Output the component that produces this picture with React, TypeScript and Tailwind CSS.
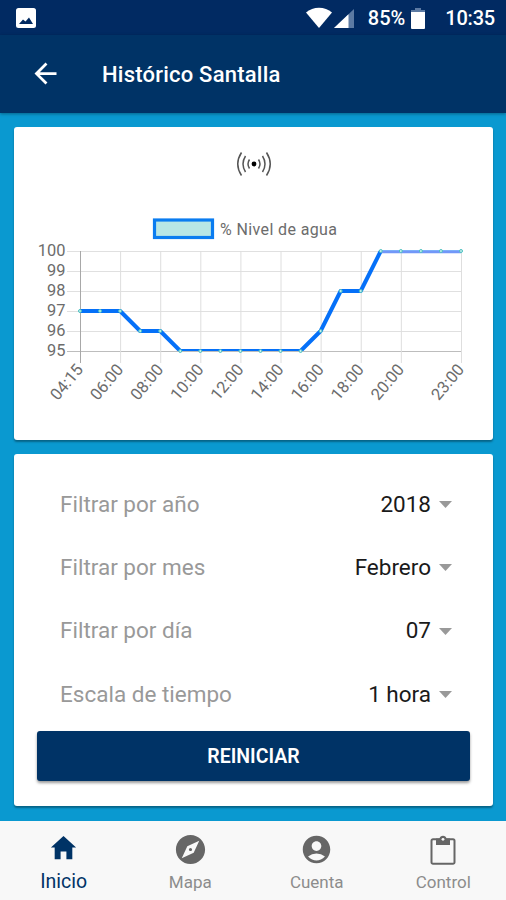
import type { ReactNode } from "react";
import { MdAccountCircle, MdArrowBack, MdExplore } from "react-icons/md";

const LEVELS = [97, 97, 97, 96, 96, 95, 95, 95, 95, 95, 95, 95, 96, 98, 98, 100, 100, 100, 100, 100];

const TIME_TICKS = [
  { index: 0, label: "04:15" },
  { index: 2, label: "06:00" },
  { index: 4, label: "08:00" },
  { index: 6, label: "10:00" },
  { index: 8, label: "12:00" },
  { index: 10, label: "14:00" },
  { index: 12, label: "16:00" },
  { index: 14, label: "18:00" },
  { index: 16, label: "20:00" },
  { index: 19, label: "23:00" },
];

const LEVEL_TICKS = [100, 99, 98, 97, 96, 95];

const FILTERS = [
  { label: "Filtrar por año", value: "2018" },
  { label: "Filtrar por mes", value: "Febrero" },
  { label: "Filtrar por día", value: "07" },
  { label: "Escala de tiempo", value: "1 hora" },
];

function HomeIcon() {
  return (
    <svg className="mb-[2px]" width="31" height="31" viewBox="0 0 512 512" fill="currentColor">
      <path d="M208 448V320h96v128h97.600V256H464L256 64 48 256h62.400v192z" />
    </svg>
  );
}

function ClipboardIcon() {
  return (
    <svg width="26" height="30" viewBox="0 0 26 30" fill="none">
      <path
        d="M3 4.200h20a1.500 1.500 0 0 1 1.500 1.500v21.600a1.500 1.500 0 0 1-1.500 1.500H3a1.500 1.500 0 0 1-1.500-1.500V5.700A1.500 1.500 0 0 1 3 4.200z"
        stroke="currentColor"
        strokeWidth="2"
      />
      <path d="M6 3.500h3.500a3.600 3.600 0 0 1 7 0H20V10H6z" fill="currentColor" />
      <circle cx="13" cy="4.300" r="1.400" fill="#f8f8f8" />
    </svg>
  );
}

const TABS: { label: string; icon: ReactNode; active?: boolean }[] = [
  { label: "Inicio", icon: <HomeIcon />, active: true },
  { label: "Mapa", icon: <MdExplore size={35} /> },
  { label: "Cuenta", icon: <MdAccountCircle size={33} /> },
  { label: "Control", icon: <ClipboardIcon /> },
];

// Plot area inside the chart svg
const LEFT = 66;
const RIGHT = 447;
const TOP = 51;
const BOTTOM = 151;

const xOf = (index: number) => LEFT + (index * (RIGHT - LEFT)) / (LEVELS.length - 1);
const yOf = (level: number) => BOTTOM - (level - 95) * 20;

function StatusBar() {
  return (
    <div className="flex h-[35px] shrink-0 items-center bg-[#012a62] pl-4 pr-[11px] pt-px text-[20px] font-medium text-white">
      <svg className="mb-px" width="20" height="20" viewBox="0 0 20 20">
        <rect width="20" height="20" rx="2.500" fill="#fff" />
        <path d="M3 16l4-4.500 2.500 2 3.500-4L17 16z" fill="#012a62" />
      </svg>
      <svg className="ml-auto" width="49" height="22" viewBox="0 0 49 22">
        <path d="M0 5.500C7-.8 19-.8 26 5.500L13 21z" fill="#fff" />
        <path d="M48 2v19H28z" fill="#5c7aa3" />
        <path d="M42.500 7.200V21H28z" fill="#fff" />
      </svg>
      <span className="ml-[13px]">85%</span>
      <svg className="ml-[6px]" width="14" height="21" viewBox="0 0 14 21">
        <path d="M4 0h6v2h4v3H0V2h4z" fill="#5c7aa3" />
        <path d="M0 4h14v16a1 1 0 0 1-1 1H1a1 1 0 0 1-1-1z" fill="#fff" />
      </svg>
      <span className="ml-[20px] tracking-[-0.2px]">10:35</span>
    </div>
  );
}

function SignalIcon() {
  return (
    <svg width="36" height="26" viewBox="0 0 36 26" fill="none" stroke="#555" strokeWidth="1.500">
      <circle cx="18" cy="13" r="2.400" fill="#000" stroke="none" />
      <path d="M13.500 8.500q-3 4.500 0 9M9.500 5q-5 8 0 16M5.500 1.500q-7.500 11.500 0 23" />
      <path d="M22.500 8.500q3 4.500 0 9M26.500 5q5 8 0 16M30.500 1.500q7.500 11.500 0 23" />
    </svg>
  );
}

function LevelChart() {
  const points = LEVELS.map((level, i) => `${xOf(i)},${yOf(level)}`).join(" ");
  const fullFrom = xOf(LEVELS.indexOf(100));

  return (
    <svg width="479" height="210" viewBox="0 0 479 210" className="block">
      <defs>
        <clipPath id="plot">
          <rect x={LEFT} y={TOP - 0.5} width={RIGHT - LEFT} height={BOTTOM - TOP + 0.5} />
        </clipPath>
      </defs>
      <rect x="140.500" y="20" width="58" height="17.500" fill="#b8e6e5" stroke="#0a7cf0" strokeWidth="3.200" />
      <text x="206" y="35" fontSize="16" fill="#6c6c6c" textLength="117">
        % Nivel de agua
      </text>
      {LEVEL_TICKS.map((level) => (
        <g key={level}>
          <line x1={LEFT - 13} x2={RIGHT} y1={yOf(level) + 0.5} y2={yOf(level) + 0.5} stroke={level === 95 ? "#bdbdbd" : "#e0e0e0"} />
          <text x="51.500" y={yOf(level) + 5} fontSize="16.400" fill="#6c6c6c" textAnchor="end">
            {level}
          </text>
        </g>
      ))}
      {TIME_TICKS.map(({ index, label }) => (
        <g key={label}>
          <line x1={xOf(index) + 0.5} x2={xOf(index) + 0.5} y1={TOP} y2={BOTTOM + 12} stroke={index === 0 ? "#a8a8a8" : "#dedede"} />
          <text
            transform={`translate(${xOf(index) + 4} ${BOTTOM + 19}) rotate(-50)`}
            fontSize="16.400"
            fill="#6c6c6c"
            textAnchor="end"
          >
            {label}
          </text>
        </g>
      ))}
      <polyline points={points} fill="none" stroke="#0570f8" strokeWidth="4" strokeLinejoin="round" clipPath="url(#plot)" />
      <line x1={fullFrom + 1} x2={RIGHT} y1={TOP + 1} y2={TOP + 1} stroke="#7297f8" strokeWidth="2.500" />
      {LEVELS.map((level, i) => (
        <circle key={i} cx={xOf(i)} cy={yOf(level)} r="1.500" fill="#c8efee" stroke="#4bc0c0" />
      ))}
    </svg>
  );
}

export default function App() {
  return (
    <div className="flex h-[900px] w-[506px] flex-col bg-[#0a99d0] font-['Roboto',sans-serif]">
      <StatusBar />
      <header className="flex h-[78px] shrink-0 items-center bg-[#003366] pl-[29px] text-white shadow-[0_1px_3px_rgba(0,0,0,0.35)]">
        <MdArrowBack size={33} className="mb-[2px]" />
        <h1 className="ml-[40px] text-[22px] font-medium tracking-[0.22px]">Histórico Santalla</h1>
      </header>

      <main className="flex flex-1 flex-col gap-[14px] px-[14px] pt-[14px]">
        <section className="flex h-[313px] w-[479px] flex-col rounded-[3px] bg-white shadow-[0_2px_2px_rgba(0,0,0,0.35)]">
          <div className="flex justify-center pt-[24px]">
            <SignalIcon />
          </div>
          <div className="mt-[23px]">
            <LevelChart />
          </div>
        </section>

        <section className="h-[352px] w-[479px] rounded-[3px] bg-white px-[23px] pt-[19px] shadow-[0_2px_2px_rgba(0,0,0,0.35)]">
          {FILTERS.map((filter) => (
            <div key={filter.label} className="flex h-[63.300px] items-center pl-[23px] pr-[18px] text-[22.500px]">
              <span className="text-[#999]">{filter.label}</span>
              <span className="ml-auto text-[#1a1a1a]">{filter.value}</span>
              <svg className="ml-2" width="13" height="7" viewBox="0 0 13 7">
                <path d="M0 0h13L6.500 7z" fill="#999" />
              </svg>
            </div>
          ))}
          <button className="mt-[5px] flex h-[50px] w-full items-center justify-center rounded-[3px] bg-[#003366] text-[19.500px] font-semibold text-white shadow-[0_2px_3px_rgba(0,0,0,0.4)]">
            REINICIAR
          </button>
        </section>
      </main>

      <nav className="grid h-[79px] shrink-0 grid-cols-4 bg-[#f8f8f8]">
        {TABS.map(({ label, icon, active }) => (
          <div key={label} className={active ? "flex flex-col items-center pl-px pt-[10px] text-[#003366]" : "flex flex-col items-center pl-px pt-[11px] text-[#666]"}>
            <div className="flex h-[35px] items-center">{icon}</div>
            <span className={active ? "mt-[4px] text-[19.500px] leading-6" : "mt-[3px] text-[17px] leading-6 text-[#8c8c8c]"}>{label}</span>
          </div>
        ))}
      </nav>
    </div>
  );
}
